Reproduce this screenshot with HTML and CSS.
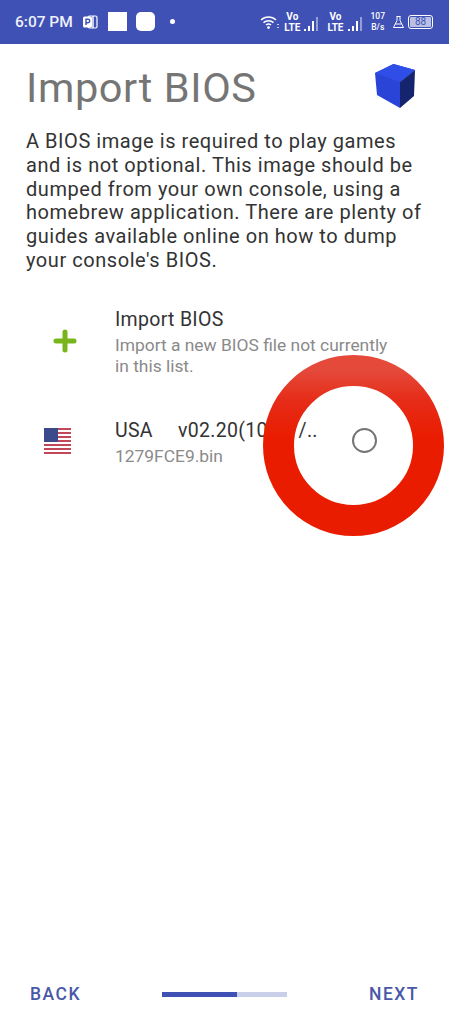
FILE: index.html
```html
<!DOCTYPE html>
<html lang="en">
<head>
  <meta charset="UTF-8">
  <meta name="viewport" content="width=device-width, initial-scale=1.0">
  <title>Import BIOS</title>
  <link rel="stylesheet" href="styles.css">
</head>
<body>
  <div class="statusbar">
    <div class="status-left">
      <span class="clock">6:07 PM</span>
      <svg class="ppt" width="16" height="16" viewBox="0 0 16 16">
        <rect x="6" y="2" width="9" height="12" rx="1.5" fill="none" stroke="#fff" stroke-width="1.2"/>
        <path d="M11 2v12" stroke="#fff" stroke-width="1.4"/>
        <rect x="1" y="2.5" width="9" height="11" rx="1.5" fill="#fff"/>
        <path d="M4 11V5.2h2a1.7 1.7 0 0 1 0 3.5H4" fill="none" stroke="#3f51b5" stroke-width="1.4"/>
      </svg>
      <span class="notif-square"></span>
      <span class="notif-square rounded"></span>
      <span class="notif-dot"></span>
    </div>
    <div class="status-right">
      <svg width="20" height="16" viewBox="0 0 20 16">
        <path d="M1 6a11 11 0 0 1 15 0M3.5 8.6a7.5 7.5 0 0 1 10 0M6 11a4 4 0 0 1 5 0" fill="none" stroke="#fff" stroke-width="1.5"/>
        <circle cx="8.5" cy="13.6" r="1.4" fill="#fff"/>
        <path d="M18 10v1M18 13v1" stroke="#fff" stroke-width="1.4"/>
      </svg>
      <span class="volte"><span>Vo</span><span>LTE</span></span>
      <span class="bars"><i class="b1"></i><i class="b2"></i><i class="b3"></i><i class="b4"></i></span>
      <span class="volte second"><span>Vo</span><span>LTE</span></span>
      <span class="bars"><i class="b1"></i><i class="b2"></i><i class="b3"></i><i class="b4"></i></span>
      <span class="speed"><span>107</span><span>B/s</span></span>
      <svg class="flask" width="13" height="14" viewBox="0 0 13 14">
        <path d="M4.5 1.5h4M5 1.5v4L1.5 12.5h10L8 5.5v-4M3.4 9h6" fill="none" stroke="#fff" stroke-width="1"/>
      </svg>
      <span class="battery"><span class="level">88</span></span>
    </div>
  </div>

  <main class="content">
    <header class="page-head">
      <h1>Import BIOS</h1>
      <svg class="cube" width="42" height="44" viewBox="0 0 42 44">
        <path d="M0 9 18.5 0 40 6 25 18 25 44 2 31z" fill="#2a44d8"/>
        <path d="M0 9 18.5 0 40 6 25 18z" fill="#2f4ee8"/>
        <path d="M25 18 40 6 39 32 25 44z" fill="#14246e"/>
      </svg>
    </header>

    <p class="intro">A BIOS image is required to play games and is not optional. This image should be dumped from your own console, using a homebrew application. There are plenty of guides available online on how to dump your console's BIOS.</p>

    <ul class="bios-list">
      <li class="bios-row">
        <div class="bios-icon plus">
          <svg width="24" height="24" viewBox="0 0 24 24">
            <path d="M12 3v18M3 12h18" stroke="#78b51a" stroke-width="5" stroke-linecap="round"/>
          </svg>
        </div>
        <div class="bios-text">
          <div class="bios-title">Import BIOS</div>
          <div class="bios-sub wide">Import a new BIOS file not currently in this list.</div>
        </div>
      </li>
      <li class="bios-row">
        <div class="bios-icon">
          <svg width="27" height="27" viewBox="0 0 27 27">
            <rect width="27" height="27" fill="#fff"/>
            <path d="M0 1h27M0 5h27M0 9h27M0 13h27M0 17h27M0 21h27M0 25h27" stroke="#c2475a" stroke-width="2"/>
            <rect width="14" height="14" fill="#3c4a8c"/>
          </svg>
        </div>
        <div class="bios-text">
          <div class="bios-title nowrap"><span class="region">USA</span>v02.20(10/07/..</div>
          <div class="bios-sub">1279FCE9.bin</div>
        </div>
        <span class="radio"></span>
      </li>
    </ul>
  </main>

  <svg class="ring" width="181" height="181" viewBox="0 0 181 181">
    <defs>
      <linearGradient id="ringFill" x1="0" y1="0" x2="0" y2="1">
        <stop offset="0" stop-color="#e4493a"/>
        <stop offset="0.2" stop-color="#e62c18"/>
        <stop offset="0.45" stop-color="#ea1c00"/>
        <stop offset="1" stop-color="#ea1c00"/>
      </linearGradient>
    </defs>
    <circle cx="90.5" cy="90.5" r="75" fill="none" stroke="url(#ringFill)" stroke-width="31"/>
  </svg>

  <footer class="bottom-nav">
    <span class="nav-btn">BACK</span>
    <div class="progress"><div class="progress-fill"></div></div>
    <span class="nav-btn next">NEXT</span>
  </footer>
</body>
</html>
```

FILE: styles.css
```css
* {
  box-sizing: border-box;
}

html, body {
  height: 100%;
}

body {
  margin: 0;
  background: #fff;
  font-family: Roboto, sans-serif;
  color: #333;
  display: flex;
  flex-direction: column;
  height: 1024px;
  overflow: hidden;
  position: relative;
}

.statusbar {
  height: 44px;
  background: #3f51b5;
  color: #fff;
  display: flex;
  justify-content: space-between;
  align-items: center;
  padding: 0 16px 1px 15px;
  flex-shrink: 0;
}

.status-left, .status-right {
  display: flex;
  align-items: center;
}

.clock {
  font-size: 15.5px;
  font-weight: 500;
  color: #eef0fa;
  margin-right: 9px;
}

.notif-square {
  width: 19px;
  height: 19px;
  background: #fff;
  margin-left: 10px;
}

.notif-square.rounded {
  border-radius: 5px;
  margin-left: 9px;
}

.notif-dot {
  width: 5px;
  height: 5px;
  border-radius: 50%;
  background: #fff;
  margin-left: 15px;
}

.volte {
  display: flex;
  flex-direction: column;
  align-items: center;
  font-size: 10px;
  line-height: 11px;
  font-weight: 700;
  margin-left: 4px;
}

.volte.second {
  margin-left: 9px;
}

.bars {
  display: flex;
  align-items: flex-end;
  gap: 2px;
  height: 14px;
  margin: 5px 0 0 4px;
}

.bars i {
  width: 2px;
  background: #fff;
}

.bars .b1 { height: 2px; }
.bars .b2 { height: 5px; }
.bars .b3 { height: 10px; }
.bars .b4 { height: 14px; opacity: 0.45; }

.speed {
  display: flex;
  flex-direction: column;
  align-items: center;
  font-size: 8.5px;
  line-height: 11px;
  font-weight: 500;
  margin-left: 9px;
}

.flask {
  margin-left: 7px;
}

.battery {
  width: 25px;
  height: 14px;
  border: 1px solid #fff;
  border-radius: 3px;
  padding: 1px;
  margin-left: 3px;
  display: flex;
}

.level {
  flex: 1;
  background: #b9c0e4;
  border-radius: 1px;
  color: #3f51b5;
  font-size: 10px;
  line-height: 10px;
  text-align: center;
}

.content {
  flex: 1;
  padding: 0 0 0 26px;
}

.page-head {
  display: flex;
  justify-content: space-between;
  align-items: center;
  padding: 18px 32px 0 0;
}

h1 {
  margin: 0;
  font-size: 41.5px;
  font-weight: 400;
  line-height: 52px;
  color: #757575;
  letter-spacing: 0.6px;
}

.cube {
  margin-top: -4px;
}

.intro {
  margin: 16px 24px 0 0;
  font-size: 20px;
  line-height: 23.8px;
  color: #333;
  letter-spacing: 0.55px;
}

.bios-list {
  list-style: none;
  margin: 34px 0 0;
  padding: 0;
}

.bios-row {
  display: flex;
  align-items: center;
  padding-right: 72px;
  margin-bottom: 41px;
}

.bios-icon {
  width: 89px;
  padding-left: 18px;
  flex-shrink: 0;
  display: flex;
  margin-top: -2px;
}

.bios-icon.plus {
  padding-left: 27px;
}

.bios-text {
  min-width: 0;
}

.bios-title {
  font-size: 19.5px;
  line-height: 26px;
  letter-spacing: 0.3px;
  color: #333;
  margin-bottom: 2px;
}

.region {
  display: inline-block;
  width: 63px;
}

.bios-sub {
  font-size: 17.4px;
  line-height: 21px;
  color: #8a8a8a;
}

.bios-sub.wide {
  width: 280px;
}

.nowrap {
  white-space: nowrap;
}

.radio {
  width: 25px;
  height: 25px;
  border: 2.5px solid #757575;
  border-radius: 50%;
  background: #fff;
  flex-shrink: 0;
  margin-left: auto;
  margin-top: -4px;
}

.ring {
  position: absolute;
  left: 263px;
  top: 355px;
}

.bottom-nav {
  height: 60px;
  padding: 0 30px;
  display: grid;
  grid-template-columns: 1fr auto 1fr;
  align-items: center;
  flex-shrink: 0;
}

.nav-btn {
  font-size: 17.5px;
  font-weight: 500;
  color: #4a58a8;
  letter-spacing: 1.5px;
}

.nav-btn.next {
  text-align: right;
}

.progress {
  width: 125px;
  height: 5px;
  background: #c9cfe8;
}

.progress-fill {
  width: 60%;
  height: 100%;
  background: #3f51b5;
}
```
